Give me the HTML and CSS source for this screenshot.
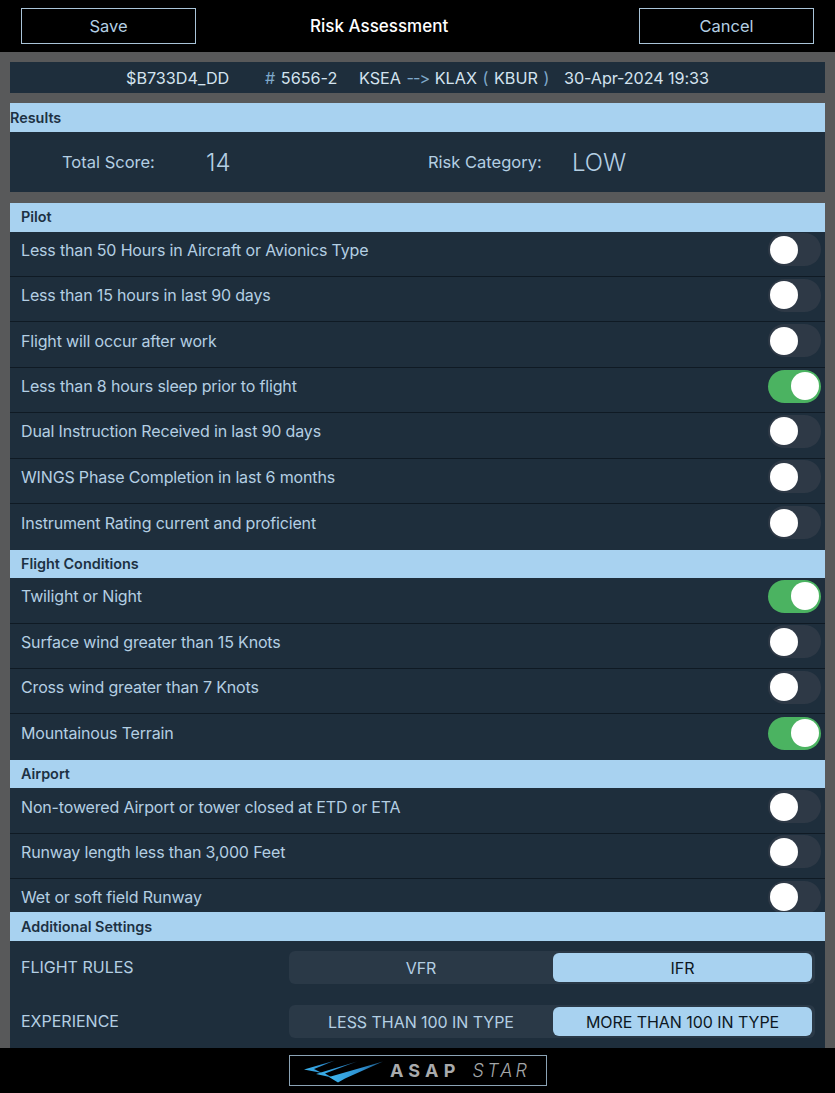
FILE: index.html
```html
<!DOCTYPE html>
<html lang="en">

<head>
    <meta charset="UTF-8">
    <meta name="viewport" content="width=device-width, initial-scale=1.0">
    <title>Risk Assessment</title>
    <link rel="stylesheet" href="styles.css">
</head>

<body>
    <header class="top-bar">
        <button class="top-btn">Save</button>
        <h1 class="top-title">Risk Assessment</h1>
        <button class="top-btn cancel">Cancel</button>
    </header>

    <main class="content">
        <div class="flight-info">
            <span class="tail">$B733D4_DD</span>
            <span class="flight-num"><b>#</b> 5656-2</span>
            <span class="route">KSEA <b class="arrow">--&gt;</b> KLAX <b>(</b> KBUR <b>)</b></span>
            <span class="flight-date">30-Apr-2024 19:33</span>
        </div>

        <section class="results">
            <h2 class="section-head flush">Results</h2>
            <div class="results-body">
                <span class="score-label">Total Score:</span>
                <span class="score-value">14</span>
                <span class="category-label">Risk Category:</span>
                <span class="category-value">LOW</span>
            </div>
        </section>

        <section class="panel">
            <div class="list">
                <h2 class="section-head">Pilot</h2>
                <div class="row"><span>Less than 50 Hours in Aircraft or Avionics Type</span><i class="toggle"></i></div>
                <div class="row"><span>Less than 15 hours in last 90 days</span><i class="toggle"></i></div>
                <div class="row"><span>Flight will occur after work</span><i class="toggle"></i></div>
                <div class="row"><span>Less than 8 hours sleep prior to flight</span><i class="toggle on"></i></div>
                <div class="row"><span>Dual Instruction Received in last 90 days</span><i class="toggle"></i></div>
                <div class="row"><span>WINGS Phase Completion in last 6 months</span><i class="toggle"></i></div>
                <div class="row last"><span>Instrument Rating current and proficient</span><i class="toggle"></i></div>

                <h2 class="section-head">Flight Conditions</h2>
                <div class="row"><span>Twilight or Night</span><i class="toggle on"></i></div>
                <div class="row"><span>Surface wind greater than 15 Knots</span><i class="toggle"></i></div>
                <div class="row"><span>Cross wind greater than 7 Knots</span><i class="toggle"></i></div>
                <div class="row last"><span>Mountainous Terrain</span><i class="toggle on"></i></div>

                <h2 class="section-head">Airport</h2>
                <div class="row"><span>Non-towered Airport or tower closed at ETD or ETA</span><i class="toggle"></i></div>
                <div class="row"><span>Runway length less than 3,000 Feet</span><i class="toggle"></i></div>
                <div class="row"><span>Wet or soft field Runway</span><i class="toggle"></i></div>
            </div>

            <h2 class="section-head">Additional Settings</h2>
            <div class="settings">
                <div class="setting">
                    <span class="setting-label">FLIGHT RULES</span>
                    <div class="segments">
                        <span class="segment">VFR</span>
                        <span class="segment active">IFR</span>
                    </div>
                </div>
                <div class="setting">
                    <span class="setting-label">EXPERIENCE</span>
                    <div class="segments">
                        <span class="segment">LESS THAN 100 IN TYPE</span>
                        <span class="segment active">MORE THAN 100 IN TYPE</span>
                    </div>
                </div>
            </div>
        </section>
    </main>

    <footer class="bottom-bar">
        <div class="logo">
            <svg class="logo-mark" width="80" height="24" viewBox="0 0 80 24">
                <defs>
                    <linearGradient id="wing" x1="0" y1="0" x2="1" y2="0">
                        <stop offset="0" stop-color="#3db6ee" />
                        <stop offset="0.6" stop-color="#2d8fd0" />
                        <stop offset="1" stop-color="#1a5078" />
                    </linearGradient>
                </defs>
                <path d="M31 1.5 L0 10.5 L18 14 L10 10 Z" fill="url(#wing)" />
                <path d="M53 2.5 L12 15 L28 18.5 L21 14.5 Z" fill="url(#wing)" />
                <path d="M79 2.5 L25 18 L34 23.5 L41 19.5 Z" fill="url(#wing)" />
            </svg>
            <span class="logo-asap">ASAP</span>
            <span class="logo-star">STAR</span>
        </div>
    </footer>
</body>

</html>
```

FILE: styles.css
```css
* {
    box-sizing: border-box;
}

html,
body {
    height: 100%;
}

body {
    margin: 0;
    display: flex;
    flex-direction: column;
    height: 100vh;
    overflow: hidden;
    font-family: Inter, "Liberation Sans", sans-serif;
    font-variant-ligatures: none;
    font-feature-settings: "calt" 0;
    background-color: #58595a;
    color: #b4cfe3;
}

/* top bar */
.top-bar {
    height: 52px;
    flex: none;
    display: flex;
    align-items: flex-start;
    padding: 8px 21px 0;
    background-color: #000;
}

.top-btn {
    width: 175px;
    height: 36px;
    background: none;
    border: 1px solid #a9c4d8;
    color: #b4cfe3;
    font-family: inherit;
    font-size: 16.5px;
    padding: 0;
}

.top-btn.cancel {
    margin-left: auto;
}

.top-title {
    margin: 8px 0 0 114px;
    font-size: 17px;
    line-height: 20px;
    font-weight: 500;
    color: #fff;
}

/* main area */
.content {
    flex: 1;
    min-height: 0;
    display: flex;
    flex-direction: column;
    padding: 10px 10px 0;
}

.flight-info {
    height: 31px;
    flex: none;
    display: flex;
    align-items: center;
    padding-left: 116px;
    margin-bottom: 10px;
    background-color: #1e2e3c;
    color: #d3e3ef;
    font-size: 16.2px;
    word-spacing: 1px;
}

.flight-info b {
    font-weight: 400;
    color: #7fa9cb;
}

.flight-info .arrow {
    letter-spacing: -1px;
}

.flight-date {
    word-spacing: 0;
    letter-spacing: -0.1px;
}

.tail {
    width: 139px;
}

.flight-num {
    width: 94px;
}

.route {
    width: 205px;
}

.results {
    flex: none;
    margin-bottom: 11px;
    background-color: #1e2e3c;
}

.section-head {
    height: 28.5px;
    margin: 0;
    padding: 1px 0 0 11px;
    background-color: #a8d2f0;
    color: #1d3143;
    font-size: 14.4px;
    font-weight: 600;
    line-height: 27.5px;
}

.section-head.flush {
    padding-left: 0;
}

.list .section-head {
    padding-top: 0;
    line-height: 28.5px;
}

.results-body {
    height: 60.5px;
    display: flex;
    align-items: center;
    padding: 0 0 0 52px;
}

.score-label {
    width: 144px;
    font-size: 16.5px;
}

.score-value {
    width: 222px;
    padding-top: 1px;
    font-size: 24px;
    font-weight: 300;
}

.category-label {
    width: 144px;
    font-size: 16.5px;
}

.category-value {
    padding-top: 1px;
    font-size: 24px;
    font-weight: 300;
}

/* scrolling list + settings */
.panel {
    flex: 1;
    min-height: 0;
    display: flex;
    flex-direction: column;
    background-color: #1e2e3c;
}

.list {
    height: 709px;
    flex: none;
    overflow: hidden;
}

.row {
    height: 45.45px;
    display: flex;
    justify-content: space-between;
    align-items: center;
    padding: 0 4px 8px 11px;
    border-bottom: 1px solid #0f1a24;
    font-size: 16px;
    letter-spacing: -0.16px;
}

.row.last {
    border-bottom: none;
}

.toggle {
    position: relative;
    flex: none;
    width: 53px;
    height: 33px;
    border-radius: 17px;
    background-color: #2e3946;
}

.toggle::after {
    content: "";
    position: absolute;
    top: 2.5px;
    left: 2px;
    width: 28px;
    height: 28px;
    border-radius: 50%;
    background-color: #fff;
}

.toggle.on {
    background-color: #4bb361;
}

.toggle.on::after {
    left: 23px;
}

.settings {
    flex: 1;
    display: flex;
    flex-direction: column;
    gap: 21px;
    padding: 10.5px 10px 0 11px;
}

.setting {
    display: flex;
    align-items: center;
    height: 33px;
}

.setting-label {
    width: 268px;
    margin-bottom: 1px;
    font-size: 16px;
}

.segments {
    width: 526px;
    height: 33px;
    display: flex;
    align-items: center;
    border-radius: 6px;
    background-color: #2a3947;
}

.segment {
    width: 264px;
    padding-top: 1px;
    text-align: center;
    font-size: 16px;
    letter-spacing: -0.05px;
    line-height: 28px;
    border-radius: 6px;
}

.segment.active {
    width: 259px;
    background-color: #a8d2f0;
    color: #0c1722;
}

/* bottom bar */
.bottom-bar {
    height: 45px;
    flex: none;
    display: flex;
    justify-content: center;
    align-items: flex-start;
    background-color: #000;
}

.logo {
    width: 258px;
    height: 31px;
    display: flex;
    align-items: center;
    padding-left: 14px;
    margin: 7px 0 0 1px;
    border: 1px solid #8ba3b5;
}

.logo-mark {
    flex: none;
}

.logo-asap {
    margin-left: 6px;
    font-size: 18px;
    font-weight: 700;
    letter-spacing: 5.2px;
    color: #a9abad;
}

.logo-star {
    margin-left: 12px;
    font-size: 18px;
    font-style: italic;
    font-weight: 300;
    letter-spacing: 3.2px;
    color: #a3a6a8;
}
```
